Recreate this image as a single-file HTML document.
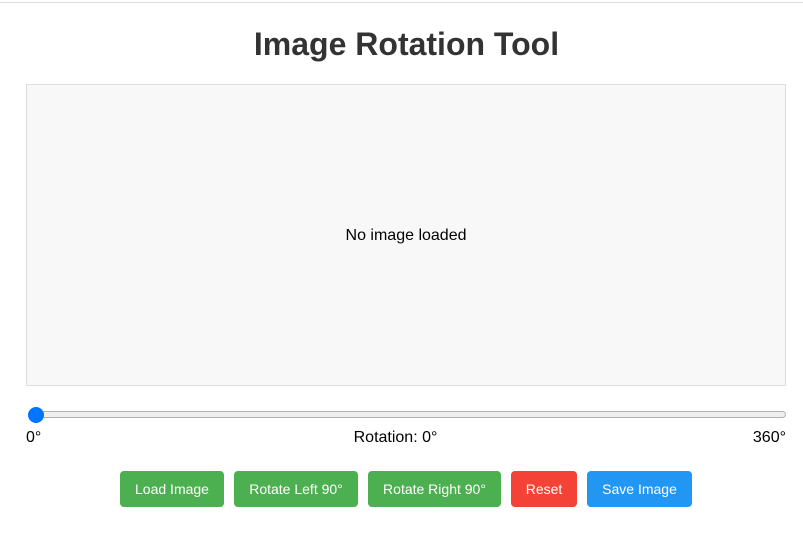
<!DOCTYPE html>
<html><head><style>
body{margin:0;background:#fff;font-family:"Liberation Sans",Arial,sans-serif;width:803px;height:556px;overflow:hidden}
.card{position:absolute;left:0;top:2px;width:803px;height:548px;background:#fff;border-top:1px solid #ddd}
h1{position:absolute;top:22px;left:5px;width:803px;margin:0;text-align:center;font-size:32px;font-weight:bold;color:#333;line-height:38px}
.box{position:absolute;left:26px;top:84px;width:758px;height:298px;background:#f8f8f8;border:1px solid #ddd;display:flex;align-items:center;justify-content:center;font-size:16px;color:#000;padding-top:2px;box-sizing:content-box}
.track{position:absolute;left:28px;top:411px;width:758px;height:7px;background:#efefef;border:1px solid #b2b2b2;border-radius:4px;box-sizing:border-box}
.thumb{position:absolute;left:28px;top:407px;width:16px;height:16px;border-radius:50%;background:#0075ff}
.lab{position:absolute;top:429px;font-size:16px;color:#000}
.btn{position:absolute;top:471px;height:36px;border-radius:4px;color:#fff;font-size:14px;line-height:36px;text-align:center}
.g{background:#4caf50}
</style></head><body>
<div class="card">
<h1>Image Rotation Tool</h1>
</div>
<div class="box">No image loaded</div>
<div class="track"></div><div class="thumb"></div>
<div class="lab" style="left:26px">0°</div>
<div class="lab" style="left:0;width:803px;text-align:center;margin-left:-6px">Rotation: 0°</div>
<div class="lab" style="right:17px">360°</div>
<div class="btn g" style="left:120px;width:104px">Load Image</div>
<div class="btn g" style="left:234px;width:124px">Rotate Left 90°</div>
<div class="btn g" style="left:368px;width:133px">Rotate Right 90°</div>
<div class="btn" style="left:511px;width:66px;background:#f44336">Reset</div>
<div class="btn" style="left:587px;width:105px;background:#2196f3">Save Image</div>
</body></html>
